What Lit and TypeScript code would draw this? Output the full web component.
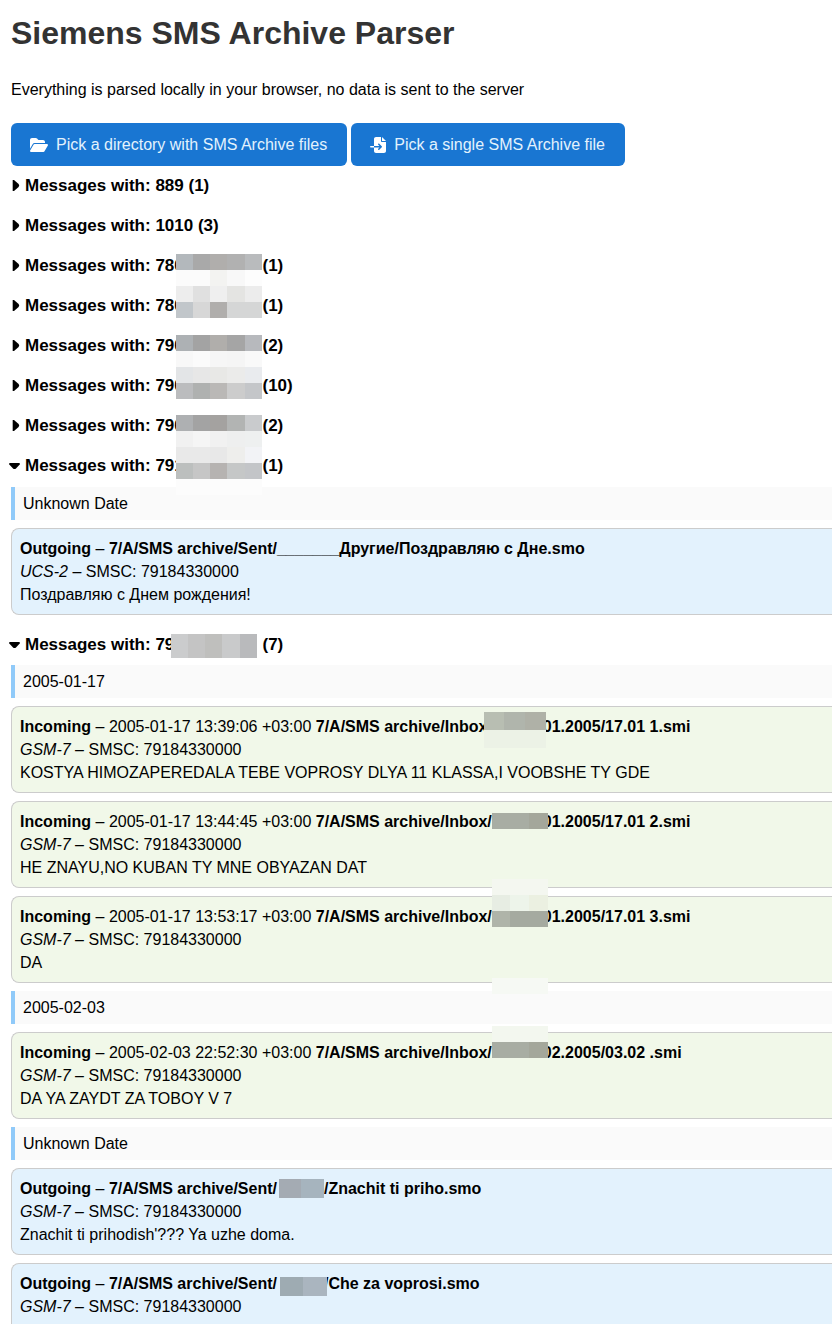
import { LitElement, html, css, svg, nothing, type TemplateResult } from "lit";
import { customElement, property } from "lit/decorators.js";
import { styleMap } from "lit/directives/style-map.js";

interface Mosaic {
  gap: number;
  left: number;
  top: number;
  width: number;
  cell: number;
  rows: string[][];
}

interface Message {
  outgoing?: boolean;
  time?: string;
  path: string;
  rest?: string;
  mask?: Mosaic;
  encoding: string;
  text: string;
}

interface Day {
  date: string;
  messages: Message[];
}

interface Thread {
  number: string;
  count: number;
  mask?: Mosaic;
  days?: Day[];
}

const phone = (top: number, rows: string[][], left = -8, cell = 16): Mosaic => ({
  gap: 74, left, top, width: 86, cell, rows,
});
const inbox = (top: number, rows: string[][], cell = 16, left = 0, width = 56): Mosaic => ({
  gap: 51, left, top, width, cell, rows,
});

const threads: Thread[] = [
  { number: "889", count: 1 },
  { number: "1010", count: 3 },
  {
    number: "780", count: 1,
    mask: phone(0, [
      ["#b3b8bc", "#a9a9a9", "#b0aeac", "#b1b1b1", "#b9bbbd"],
      ["#fbfbfb", "#fbfbfb", "#f3f3f1", "#f8f8f8", "#fdfdfd"],
      ["#ededed", "#e0e0e0", "#efefef", "#e4e4e2", "#ececec"],
      ["#c1c6ca", "#d7d7d7", "#b0aeac", "#d5d6d6", "#d5d6d6"],
    ]),
  },
  { number: "780", count: 1, mask: phone(0, []) },
  {
    number: "790", count: 2,
    mask: phone(1, [
      ["#adb1b4", "#a3a3a3", "#b0aeab", "#a5a5a5", "#b7b9bd"],
      ["#f8f8f8", "#fbfbfb", "#f6f6f6", "#f5f5f5", "#f9f9f9"],
      ["#e3e5e7", "#e7e7e7", "#e8e8e6", "#ebebea", "#e9ebee"],
      ["#bbbcbe", "#afb1b0", "#bab8b6", "#cccccc", "#c4c6c9"],
    ]),
  },
  { number: "790", count: 10, mask: phone(0, []) },
  {
    number: "790", count: 2,
    mask: phone(1, [
      ["#aeb0b2", "#a3a3a3", "#a4a2a0", "#b2b4b3", "#c9cbcd"],
      ["#f1f1f1", "#f5f5f5", "#f1f1f1", "#eeefef", "#eef0f0"],
      ["#e9e9e9", "#e9e9e9", "#e8e8e8", "#eeeeec", "#f2f3f6"],
      ["#bcbfbe", "#c6c6c6", "#b6b3b1", "#c5c7c7", "#c3c5c8"],
      ["#fcfcfc", "#fcfcfc", "#fcfcfc", "#fcfcfc", "#fcfcfc"],
    ]),
  },
  {
    number: "791", count: 1, mask: phone(0, []),
    days: [{
      date: "Unknown Date",
      messages: [{
        outgoing: true,
        path: "7/A/SMS archive/Sent/_______Другие/Поздравляю с Дне.smo",
        encoding: "UCS-2",
        text: "Поздравляю с Днем рождения!",
      }],
    }],
  },
  {
    number: "790", count: 7,
    mask: phone(1, [["#cbcccd", "#c4c4c4", "#bfbfbd", "#c9cacb", "#b9babc"]], -13, 24),
    days: [
      {
        date: "2005-01-17",
        messages: [
          {
            time: "2005-01-17 13:39:06 +03:00",
            path: "7/A/SMS archive/Inbox/", rest: "01.2005/17.01 1.smi",
            mask: inbox(-3, [["#b8beb2", "#b0b5ac", "#afb1a7"], ["#ecf2e6", "#ecf2e6", "#ecf2e6"]], 18, -8, 62),
            encoding: "GSM-7",
            text: "KOSTYA HIMOZAPEREDALA TEBE VOPROSY DLYA 11 KLASSA,I VOOBSHE TY GDE",
          },
          {
            time: "2005-01-17 13:44:45 +03:00",
            path: "7/A/SMS archive/Inbox/", rest: "01.2005/17.01 2.smi",
            mask: inbox(3, [["#a8ada3", "#a8ada3", "#a4a79b"]]),
            encoding: "GSM-7",
            text: "HE ZNAYU,NO KUBAN TY MNE OBYAZAN DAT",
          },
          {
            time: "2005-01-17 13:53:17 +03:00",
            path: "7/A/SMS archive/Inbox/", rest: "01.2005/17.01 3.smi",
            mask: inbox(-26, [
              ["#f4f7f0", "#f4f7f0", "#f4f7f0"],
              ["#e7ede3", "#edf4ea", "#ebf0e1"],
              ["#afb4a9", "#a5aaa0", "#a5aaa0"],
            ]),
            encoding: "GSM-7",
            text: "DA",
          },
        ],
      },
      {
        date: "2005-02-03",
        messages: [{
          time: "2005-02-03 22:52:30 +03:00",
          path: "7/A/SMS archive/Inbox/", rest: "02.2005/03.02 .smi",
          mask: inbox(-63, [
            ["#f6f9f4", "#f6f9f4", "#f6f9f4"],
            ["transparent"], ["transparent"],
            ["#f3f7ef", "#f3f7ef", "#f3f7ef"],
            ["#a8ada3", "#a8ada3", "#a4a79b"],
          ]),
          encoding: "GSM-7",
          text: "DA YA ZAYDT ZA TOBOY V 7",
        }],
      },
      {
        date: "Unknown Date",
        messages: [
          {
            outgoing: true,
            path: "7/A/SMS archive/Sent/", rest: "/Znachit ti priho.smo",
            mask: { gap: 47, left: 2, top: 2, width: 45, cell: 19, rows: [["#a4abb3", "#a6b4be"]] },
            encoding: "GSM-7",
            text: "Znachit ti prihodish'??? Ya uzhe doma.",
          },
          {
            outgoing: true,
            path: "7/A/SMS archive/Sent/", rest: "/Che za voprosi.smo",
            mask: { gap: 47, left: 3, top: 5, width: 47, cell: 19, rows: [["#9eabb2", "#aab5bf"]] },
            encoding: "GSM-7",
            text: "",
          },
        ],
      },
    ],
  },
];

const folderOpen = svg`<path d="M88.7 223.8L0 375.8 0 96C0 60.7 28.7 32 64 32l117.5 0c17 0 33.3 6.7 45.3 18.7l26.5 26.5c12 12 28.3 18.7 45.3 18.7L416 96c35.3 0 64 28.7 64 64l0 32-336 0c-22.8 0-43.8 12.1-55.3 31.8zm27.6 16.1C122.1 230 132.6 224 144 224l400 0c11.5 0 22 6.1 27.7 16.1s5.7 22.2-.1 32.1l-112 192C453.9 474 443.4 480 432 480L32 480c-11.5 0-22-6.1-27.7-16.1s-5.7-22.2 .1-32.1l112-192z"/>`;
const fileImport = svg`<path d="M128 64c0-35.3 28.7-64 64-64L352 0l0 128c0 17.7 14.3 32 32 32l128 0 0 288c0 35.3-28.7 64-64 64l-256 0c-35.3 0-64-28.7-64-64l0-112 174.1 0-39 39c-9.4 9.4-9.4 24.6 0 33.9s24.6 9.4 33.9 0l80-80c9.4-9.4 9.4-24.6 0-33.9l-80-80c-9.4-9.4-24.6-9.4-33.9 0s-9.4 24.6 0 33.9l39 39L128 288l0-224zm0 224l0 48L24 336c-13.3 0-24-10.7-24-24s10.7-24 24-24l104 0zM512 128l-128 0L384 0 512 128z"/>`;

@customElement("redacted-text")
class RedactedText extends LitElement {
  static styles = css`
    :host { display: inline-block; position: relative; height: 23px; vertical-align: top; }
    .gap { display: block; }
    .mosaic { position: absolute; display: grid; pointer-events: none; z-index: 1; }
    .row { display: flex; }
    .cell { flex: 1; }
  `;

  @property({ attribute: false }) mask!: Mosaic;

  render() {
    const m = this.mask;
    return html`<span class="gap" style=${styleMap({ width: `${m.gap}px` })}></span>
      <span class="mosaic" style=${styleMap({
        left: `${m.left}px`, top: `${m.top}px`, width: `${m.width}px`, gridAutoRows: `${m.cell}px`,
      })}>${m.rows.map((row) => html`<span class="row">${row.map(
        (color) => html`<span class="cell" style=${styleMap({ background: color })}></span>`,
      )}</span>`)}</span>`;
  }
}

@customElement("sms-message")
class SmsMessage extends LitElement {
  static styles = css`
    :host { display: block; }
    .card {
      padding: 8px;
      border: 1px solid #ccc;
      border-right: 0;
      border-radius: 8px 0 0 8px;
      background: #f1f8e9;
      line-height: 23px;
    }
    .outgoing { background: #e3f2fd; }
    .line { min-height: 23px; white-space: nowrap; }
  `;

  @property({ attribute: false }) message!: Message;

  render() {
    const m = this.message;
    return html`<article class="card ${m.outgoing ? "outgoing" : ""}">
      <div class="line"><b>${m.outgoing ? "Outgoing" : "Incoming"}</b> – ${m.time ? `${m.time} ` : nothing}<b>${m.path}${m.mask ? html`<redacted-text .mask=${m.mask}></redacted-text>` : nothing}${m.rest ?? nothing}</b></div>
      <div class="line"><i>${m.encoding}</i> – SMSC: 79184330000</div>
      <div class="line">${m.text}</div>
    </article>`;
  }
}

@customElement("app-root")
class AppRoot extends LitElement {
  static styles = css`
    :host {
      display: block;
      color: #000;
      background: #fff;
      font: 16px/23px "Liberation Sans", Arial, sans-serif;
    }
    .page { padding: 10px 0 8px 11px; }
    .title { margin: 0; color: #333; font-size: 32px; line-height: 46px; }
    .intro { margin: 22px 0; }
    .actions { display: flex; flex-wrap: wrap; gap: 4px; }
    .action {
      display: flex;
      align-items: center;
      gap: 8px;
      height: 43px;
      padding: 0 20px 0 19px;
      border: 0;
      border-radius: 6px;
      background: #1976d2;
      color: #e3f2fd;
      font: inherit;
      cursor: pointer;
    }
    .icon { height: 16px; fill: #fff; }
    .threads { display: grid; gap: 17px; padding-top: 8px; }
    .summary {
      display: flex;
      align-items: center;
      list-style: none;
      font-size: 17px;
      font-weight: bold;
      line-height: 23px;
      cursor: pointer;
    }
    .thread[open] + .thread[open] { padding-top: 1px; }
    .summary::-webkit-details-marker { display: none; }
    .marker { width: 16px; height: 14px; margin-left: -2px; }
    .label { white-space: pre; }
    .days { display: grid; gap: 8px; padding: 9px 0 0; }
    .thread:not([open]) + .thread[open] .days { padding-top: 10px; }
    .day { display: grid; gap: 8px; }
    .date {
      margin: 0;
      padding: 5px 8px;
      border-left: 4px solid #90caf9;
      background: #fafafa;
      font-size: 16px;
      font-weight: normal;
    }
  `;

  private button(icon: TemplateResult<2>, box: string, label: string) {
    return html`<button class="action" type="button">
      <svg class="icon" viewBox=${box} aria-hidden="true">${icon}</svg>${label}
    </button>`;
  }

  private thread(t: Thread) {
    return html`<details class="thread" ?open=${!!t.days}>
      <summary class="summary">
        <svg class="marker" viewBox="0 0 16 14" aria-hidden="true">
          <path d=${t.days ? "M0.3 4h10.4v1.4L7 9.5q-1.5 1.2-3 0L0.3 5.4z" : "M3.7 1h1.3L9.6 5q1.3 1.5 0 3L5 12H3.7z"} />
        </svg>
        <span class="label">Messages with: ${t.number}${t.mask ? html`<redacted-text .mask=${t.mask}></redacted-text>` : nothing} (${t.count})</span>
      </summary>
      ${t.days ? html`<div class="days">${t.days.map((d) => html`<section class="day">
        <h3 class="date">${d.date}</h3>
        ${d.messages.map((m) => html`<sms-message .message=${m}></sms-message>`)}
      </section>`)}</div>` : nothing}
    </details>`;
  }

  render() {
    return html`<main class="page">
      <h1 class="title">Siemens SMS Archive Parser</h1>
      <p class="intro">Everything is parsed locally in your browser, no data is sent to the server</p>
      <div class="actions">
        ${this.button(folderOpen, "0 0 576 512", "Pick a directory with SMS Archive files")}
        ${this.button(fileImport, "0 0 512 512", "Pick a single SMS Archive file")}
      </div>
      <div class="threads">${threads.map((t) => this.thread(t))}</div>
    </main>`;
  }
}
